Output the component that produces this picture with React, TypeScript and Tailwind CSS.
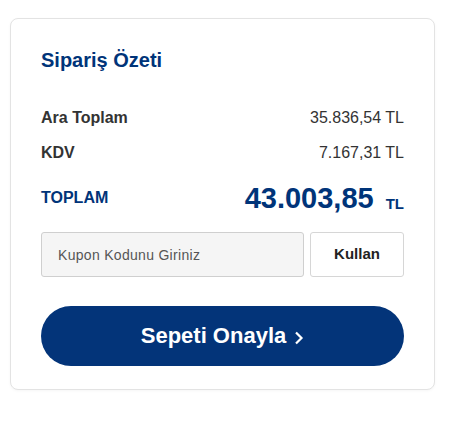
import React from "react";

interface IRowProps {
  label: string;
  value: string;
}

const SummaryRow: React.FC<IRowProps> = ({ label, value }) => {
  return (
    <div className="flex items-center justify-between text-[16px] leading-[20px] text-[#333]">
      <span className="font-bold">{label}</span>
      <span>{value}</span>
    </div>
  );
};

const App: React.FC = () => {
  return (
    <div className="min-h-[424px] bg-white pt-[18px] pl-[10px] font-['Liberation_Sans',Arial,sans-serif]">
      <div className="w-[425px] rounded-[8px] border border-[#e3e3e3] bg-white px-[30px] pt-[30px] pb-[23px] shadow-[0_1px_3px_rgba(0,0,0,0.04)]">
        <h2 className="text-[20px] leading-[23px] font-bold text-[#003479]">Sipariş Özeti</h2>

        <div className="mt-[36px]">
          <SummaryRow label="Ara Toplam" value="35.836,54 TL" />
        </div>
        <div className="mt-[15px]">
          <SummaryRow label="KDV" value="7.167,31 TL" />
        </div>

        <div className="mt-[19px] flex h-[32px] items-center justify-between text-[#003479]">
          <span className="text-[16px] leading-[20px] font-bold">TOPLAM</span>
          <div className="flex items-baseline gap-[12px]">
            <span className="text-[29px] leading-[32px] font-bold">43.003,85</span>
            <span className="relative top-[1px] text-[15px] leading-[20px] font-bold">TL</span>
          </div>
        </div>

        <div className="mt-[18px] flex h-[45px] gap-[6px]">
          <input
            type="text"
            placeholder="Kupon Kodunu Giriniz"
            className="h-full w-[263px] rounded-[3px] border border-[#cfcfcf] bg-[#f5f5f5] pl-[16px] text-[14px] tracking-[0.3px] text-[#333] outline-none placeholder:text-[#555]"
          />
          <button className="h-full w-[94px] rounded-[3px] border border-[#d6d6d6] bg-white text-[15px] font-bold text-[#222]">
            Kullan
          </button>
        </div>

        <button className="mt-[29px] flex h-[60px] w-full items-center justify-center gap-[8px] rounded-full bg-[#033479] text-white">
          <span className="text-[22px] leading-[24px] font-bold">Sepeti Onayla</span>
          <svg width="10" height="14" viewBox="0 0 10 14" className="mt-[3px]">
            <path d="M2 1.5 L7.5 7 L2 12.5" fill="none" stroke="white" strokeWidth="2.2" />
          </svg>
        </button>
      </div>
    </div>
  );
};

export default App;
